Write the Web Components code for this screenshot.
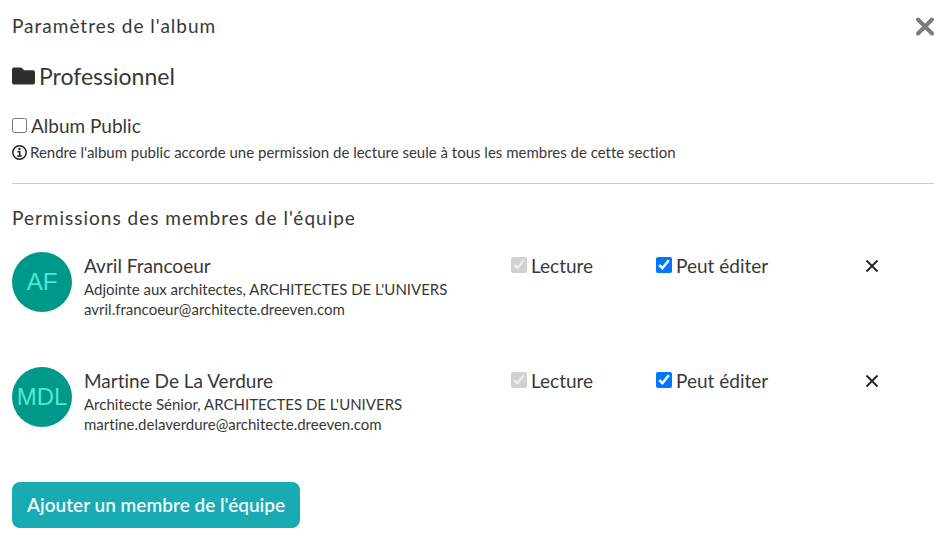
<!DOCTYPE html>
<html lang="fr"><head><meta charset="utf-8"><title>Paramètres de l'album</title>
<style>
body{margin:0;background:#fff;color:#383838;font-family:Lato,"Liberation Sans",sans-serif;font-size:19px;line-height:24px;font-variant-ligatures:none}
</style></head><body>
<album-settings></album-settings>
<script>
class BaseElement extends HTMLElement{
  connectedCallback(){
    if(this.shadowRoot)return;
    this.attachShadow({mode:'open'}).innerHTML='<style>*{box-sizing:border-box}h1,h2,h3,p{margin:0;font-weight:400}button{font:inherit;border:0;background:none;padding:0;cursor:pointer}svg{display:block;flex:none}</style>'+this.view();
  }
}
customElements.define('check-option',class extends BaseElement{
  view(){
    const c=this.hasAttribute('checked')?'checked':'',d=this.hasAttribute('disabled')?'disabled':'';
    return `<style>:host{display:block;--size:var(--check-size,16px)}label{display:flex;gap:4px;line-height:24px}
    input{width:var(--size);height:var(--size);margin:calc(19px - var(--size)) 0 0;flex:none}</style>
    <label><input type="checkbox" ${c} ${d}><slot></slot></label>`;
  }
});
customElements.define('user-avatar',class extends BaseElement{
  view(){
    return `<style>:host{display:flex;align-items:center;justify-content:center;width:60px;height:60px;border-radius:50%;background:#009888;color:#4fe8d6;font:24px/28px "Liberation Sans",sans-serif}</style><slot></slot>`;
  }
});
customElements.define('member-row',class extends BaseElement{
  view(){
    const a=n=>this.getAttribute(n);
    return `<style>:host{display:grid;grid-template-columns:60px minmax(0,439fr) minmax(0,145fr) minmax(0,209fr) minmax(0,69fr);min-height:68px;align-items:start}
    .info{padding:2px 12px 0}h3{font-size:19px;line-height:24px;margin-bottom:1px}.info p{font-size:15px;line-height:20px}
    check-option{padding-top:2px}
    button{justify-self:start;margin-top:7px;color:#222}</style>
    <user-avatar>${a('initials')}</user-avatar>
    <div class="info"><h3>${a('name')}</h3><p>${a('role')}</p><p>${a('email')}</p></div>
    <check-option checked disabled>Lecture</check-option>
    <check-option checked>Peut éditer</check-option>
    <button type="button" aria-label="Retirer ${a('name')}"><svg width="14" height="14" viewBox="0 0 14 14" fill="none" stroke="currentColor" stroke-width="1.8"><path d="M1.5 1.5l11 11M12.5 1.5l-11 11"/></svg></button>`;
  }
});
customElements.define('album-settings',class extends BaseElement{
  view(){
    return `<style>:host{display:block;padding:14px 9px 16px 12px}
    header{display:flex;justify-content:space-between;align-items:start}
    h1,h2{font-size:19px;line-height:24px;letter-spacing:1px}
    header button{color:#7b7b7b}
    .album{display:flex;align-items:center;gap:4px;margin-top:23px;font-size:23px;line-height:30px;letter-spacing:normal}
    .public{margin-top:23px;--check-size:15px}
    .note{display:flex;align-items:center;gap:3px;font-size:15px;line-height:20px;margin-top:4px}
    hr{border:0;border-top:1px solid #ccc;margin:21px 1px 22px 0}
    .members{display:grid;gap:47px;margin:22px 1px 0 0}
    .add{margin-top:47px;height:46px;padding:0 15px;border-radius:8px;background:#19abb3;color:#eefafa;font-weight:600;font-size:19px}</style>
    <header><h1>Paramètres de l'album</h1><button type="button" aria-label="Fermer"><svg width="20" height="24" viewBox="0 0 20 24" fill="none" stroke="currentColor" stroke-width="4" stroke-linecap="round"><path d="M3 5.5l14 14M17 5.5l-14 14"/></svg></button></header>
    <h2 class="album"><svg width="23" height="18" viewBox="0 0 23 18" fill="#2e2e2e"><path d="M0 2.5Q0 .5 2 .5h6.5q.8 0 1.4.6l1.7 1.7q.5.5 1.3.5H21q2 0 2 2v10.2q0 2-2 2H2q-2 0-2-2z"/></svg>Professionnel</h2>
    <check-option class="public">Album Public</check-option>
    <p class="note"><svg width="15" height="15" viewBox="0 0 15 15" fill="none" stroke="#222" stroke-width="1.5"><circle cx="7.5" cy="7.5" r="6.7"/><path d="M5.4 6.7h2.3v4M5.2 11h4.6" stroke-width="1.6"/><circle cx="7.4" cy="4" r="1.2" fill="#222" stroke="none"/></svg>Rendre l'album public accorde une permission de lecture seule à tous les membres de cette section</p>
    <hr><h2>Permissions des membres de l'équipe</h2>
    <section class="members">
    <member-row initials="AF" name="Avril Francoeur" role="Adjointe aux architectes, ARCHITECTES DE L'UNIVERS" email="avril.francoeur@architecte.dreeven.com"></member-row>
    <member-row initials="MDL" name="Martine De La Verdure" role="Architecte Sénior, ARCHITECTES DE L'UNIVERS" email="martine.delaverdure@architecte.dreeven.com"></member-row></section>
    <button class="add" type="button">Ajouter un membre de l'équipe</button>`;
  }
});
</script></body></html>
